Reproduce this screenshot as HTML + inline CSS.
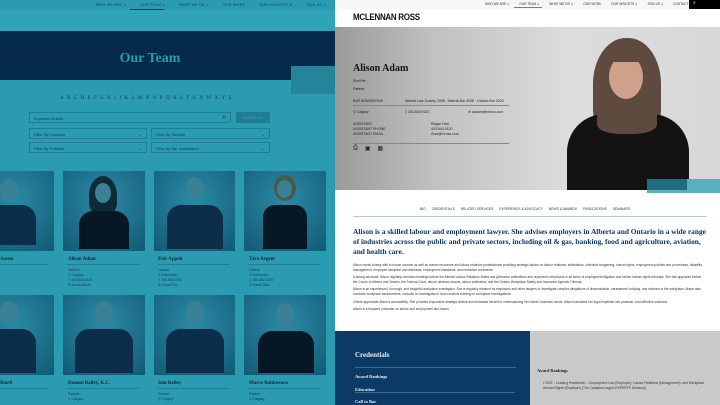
<!DOCTYPE html>
<html><head><style>
*{margin:0;padding:0;box-sizing:border-box}
body{width:720px;height:405px;overflow:hidden;position:relative;font-family:"Liberation Sans",sans-serif;background:#fff}
.a{position:absolute}
.serif{font-family:"Liberation Serif",serif}
.nav{display:flex;white-space:nowrap}
</style></head><body>
<!-- LEFT PANEL -->
<div class="a" style="left:0;top:0;width:335px;height:405px;background:#2b9bb1;overflow:hidden">
  <div class="a nav" style="left:96px;top:3px;font-size:3.5px;color:#0d3a50;gap:14px;letter-spacing:.3px"><span>WHO WE ARE ∨</span><span>OUR TEAM ∨</span><span>WHAT WE DO ∨</span><span>OUR WORK</span><span>OUR INSIGHTS ∨</span><span>JOIN US ∨</span><span>CONTACT US</span></div>
  <div class="a" style="left:130px;top:9px;width:34px;height:1px;background:#0d3a50"></div>
  <div class="a" style="left:0;top:10px;width:335px;height:21px;background:#2fa3b8"></div>
  <div class="a" style="left:0;top:31px;width:335px;height:49px;background:#062b4a"></div>
  <div class="a serif" style="left:0;top:51px;width:300px;text-align:center;color:#2b9bb1;font-size:14px;font-weight:bold">Our Team</div>
  <div class="a" style="left:291px;top:66px;width:44px;height:28px;background:#23849a"></div>
  <div class="a serif" style="left:60px;top:96px;font-size:5px;color:#0c3a55;letter-spacing:3.4px">ABCDEFGHIJKLMNOPQRSTUVWXYZ</div>
  <div class="a" style="left:29px;top:112px;width:202px;height:11px;border:1px solid #1f7e94;font-size:4px;color:#0c3a55;padding:3px 4px">Keyword Search<span style="position:absolute;right:4px;top:1px;font-size:7px">⌕</span></div>
  <div class="a" style="left:236px;top:112px;width:34px;height:11px;background:#1f7e94;font-size:4px;color:#2fa8bd;text-align:center;padding-top:3px">CLEAR ALL</div>
  <div class="a" style="left:29px;top:128px;width:118px;height:11px;border:1px solid #1f7e94;font-size:4px;color:#0c3a55;padding:3px 4px">Filter By Location<span style="float:right">⌄</span></div>
  <div class="a" style="left:151px;top:128px;width:119px;height:11px;border:1px solid #1f7e94;font-size:4px;color:#0c3a55;padding:3px 4px">Filter By Service<span style="float:right">⌄</span></div>
  <div class="a" style="left:29px;top:142px;width:118px;height:11px;border:1px solid #1f7e94;font-size:4px;color:#0c3a55;padding:3px 4px">Filter By Position<span style="float:right">⌄</span></div>
  <div class="a" style="left:151px;top:142px;width:119px;height:11px;border:1px solid #1f7e94;font-size:4px;color:#0c3a55;padding:3px 4px">Filter by Bar Jurisdiction<span style="float:right">⌄</span></div>

  <div class="a" style="left:-28px;top:171px;width:82px;height:80px;background:radial-gradient(circle at 50% 35%,#2b8aa6,#125a74)"><div class="a" style="left:28px;top:8px;width:18px;height:22px;border-radius:50%;background:#3a8196"></div><div class="a" style="left:10px;top:34px;width:54px;height:40px;border-radius:14px 14px 0 0;background:#0d2e4a"></div></div>
  <div class="a" style="left:63px;top:171px;width:82px;height:80px;background:radial-gradient(circle at 50% 35%,#2b8aa6,#125a74)"><div class="a" style="left:26px;top:5px;width:28px;height:38px;border-radius:50% 50% 30% 30%;background:#0f2b3a"></div><div class="a" style="left:32px;top:12px;width:16px;height:20px;border-radius:50%;background:#3a8196"></div><div class="a" style="left:16px;top:40px;width:50px;height:38px;border-radius:14px 14px 0 0;background:#061725"></div></div>
  <div class="a" style="left:154px;top:171px;width:81px;height:80px;background:radial-gradient(circle at 50% 35%,#2b8aa6,#125a74)"><div class="a" style="left:32px;top:6px;width:17px;height:22px;border-radius:50%;background:#3a8196"></div><div class="a" style="left:13px;top:34px;width:56px;height:44px;border-radius:14px 14px 0 0;background:#0d2e4a"></div></div>
  <div class="a" style="left:244px;top:171px;width:82px;height:80px;background:radial-gradient(circle at 50% 35%,#2b8aa6,#125a74)"><div class="a" style="left:30px;top:4px;width:22px;height:26px;border-radius:50%;background:#4a5a4a"></div><div class="a" style="left:33px;top:9px;width:15px;height:18px;border-radius:50%;background:#3a8196"></div><div class="a" style="left:19px;top:34px;width:44px;height:44px;border-radius:12px 12px 0 0;background:#061725"></div></div>
  <div class="a serif" style="left:0;top:257px;font-size:5px;font-weight:bold;color:#0c2a40">Aasen</div>
  <div class="a serif" style="left:68px;top:257px;font-size:5px;font-weight:bold;color:#0c2a40">Alison Adam</div>
  <div class="a serif" style="left:158px;top:257px;font-size:5px;font-weight:bold;color:#0c2a40">Eric Appelt</div>
  <div class="a serif" style="left:249px;top:257px;font-size:5px;font-weight:bold;color:#0c2a40">Tara Argent</div>
  <div class="a" style="left:0;top:264px;width:48px;height:1px;background:#1f7e94"></div>
  <div class="a" style="left:67px;top:264px;width:72px;height:1px;background:#1f7e94"></div>
  <div class="a" style="left:158px;top:264px;width:72px;height:1px;background:#1f7e94"></div>
  <div class="a" style="left:248px;top:264px;width:72px;height:1px;background:#1f7e94"></div>
  <div class="a" style="left:68px;top:268px;font-size:3.5px;line-height:5px;color:#0c3a55">Partner<br>⚲ Calgary<br>▯ 403.543.9120<br>✉ Email Alison</div>
  <div class="a" style="left:158px;top:268px;font-size:3.5px;line-height:5px;color:#0c3a55">Lawyer<br>⚲ Edmonton<br>▯ 780.482.9200<br>✉ Email Eric</div>
  <div class="a" style="left:249px;top:268px;font-size:3.5px;line-height:5px;color:#0c3a55">Partner<br>⚲ Edmonton<br>▯ 780.482.9200<br>✉ Email Tara</div>
  <div class="a" style="left:-28px;top:295px;width:82px;height:80px;background:radial-gradient(circle at 50% 35%,#2b8aa6,#125a74)"><div class="a" style="left:28px;top:6px;width:18px;height:24px;border-radius:50%;background:#3a8196"></div><div class="a" style="left:10px;top:34px;width:54px;height:44px;border-radius:14px 14px 0 0;background:#0d2e4a"></div></div>
  <div class="a" style="left:63px;top:295px;width:82px;height:80px;background:radial-gradient(circle at 50% 35%,#2b8aa6,#125a74)"><div class="a" style="left:32px;top:6px;width:18px;height:24px;border-radius:50%;background:#3a8196"></div><div class="a" style="left:12px;top:34px;width:58px;height:44px;border-radius:14px 14px 0 0;background:#0d2e4a"></div></div>
  <div class="a" style="left:154px;top:295px;width:81px;height:80px;background:radial-gradient(circle at 50% 35%,#2b8aa6,#125a74)"><div class="a" style="left:32px;top:6px;width:18px;height:24px;border-radius:50%;background:#3a8196"></div><div class="a" style="left:12px;top:34px;width:58px;height:44px;border-radius:14px 14px 0 0;background:#0d2e4a"></div></div>
  <div class="a" style="left:244px;top:295px;width:82px;height:80px;background:radial-gradient(circle at 50% 35%,#2b8aa6,#125a74)"><div class="a" style="left:32px;top:8px;width:18px;height:24px;border-radius:50%;background:#3a8196"></div><div class="a" style="left:14px;top:36px;width:56px;height:42px;border-radius:14px 14px 0 0;background:#061725"></div></div>
  <div class="a serif" style="left:0;top:381px;font-size:5px;font-weight:bold;color:#0c2a40">Ibarfi</div>
  <div class="a serif" style="left:68px;top:381px;font-size:5px;font-weight:bold;color:#0c2a40">Damon Bailey, K.C.</div>
  <div class="a serif" style="left:158px;top:381px;font-size:5px;font-weight:bold;color:#0c2a40">Iain Bailey</div>
  <div class="a serif" style="left:249px;top:381px;font-size:5px;font-weight:bold;color:#0c2a40">Marco Baldassaro</div>
  <div class="a" style="left:0;top:388px;width:48px;height:1px;background:#1f7e94"></div>
  <div class="a" style="left:67px;top:388px;width:72px;height:1px;background:#1f7e94"></div>
  <div class="a" style="left:158px;top:388px;width:72px;height:1px;background:#1f7e94"></div>
  <div class="a" style="left:248px;top:388px;width:72px;height:1px;background:#1f7e94"></div>
  <div class="a" style="left:68px;top:392px;font-size:3.5px;line-height:5px;color:#0c3a55">Partner<br>⚲ Calgary</div>
  <div class="a" style="left:158px;top:392px;font-size:3.5px;line-height:5px;color:#0c3a55">Partner<br>⚲ Calgary</div>
  <div class="a" style="left:249px;top:392px;font-size:3.5px;line-height:5px;color:#0c3a55">Partner<br>⚲ Calgary</div>
</div>

<!-- RIGHT PANEL -->
<div class="a" style="left:335px;top:0;width:385px;height:405px;background:#fff;overflow:hidden">
  <div class="a" style="left:0;top:0;width:385px;height:9px;background:#f6f6f6"></div>
  <div class="a nav" style="left:150px;top:2px;font-size:3.2px;color:#333;gap:10px"><span>WHO WE ARE ∨</span><span>OUR TEAM ∨</span><span>WHAT WE DO ∨</span><span>OUR WORK</span><span>OUR INSIGHTS ∨</span><span>JOIN US ∨</span><span>CONTACT US</span></div>
  <div class="a" style="left:179px;top:7px;width:28px;height:1px;background:#2b9bb1"></div>
  <div class="a" style="left:354px;top:0;width:31px;height:9px;background:#000;color:#fff;font-size:5px;padding-left:4px">⌕</div>
  <div class="a" style="left:18px;top:13px;font-size:8px;font-weight:bold;color:#111;letter-spacing:-.3px;transform:scaleY(1.1)">MCLENNAN ROSS</div>
  <div class="a" style="left:0;top:27px;width:385px;height:163px;background:linear-gradient(90deg,#9a9a9a 0%,#c0c0c0 25%,#dcdcdc 60%,#d8d8d8 100%)"></div>
  <!-- woman -->
  <div class="a" style="left:258px;top:38px;width:68px;height:96px;border-radius:48% 48% 25% 25%;background:#5e4a3e"></div>
  <div class="a" style="left:232px;top:114px;width:122px;height:76px;border-radius:38px 38px 0 0;background:#141212"></div>
  <div class="a" style="left:262px;top:110px;width:60px;height:24px;border-radius:0 0 40% 40%;background:#5e4a3e"></div>
  <div class="a" style="left:274px;top:55px;width:34px;height:44px;border-radius:50%;background:#cfa18b"></div>
  <div class="a" style="left:270px;top:44px;width:42px;height:18px;border-radius:50% 50% 0 0;background:#5e4a3e"></div>
  <div class="a" style="left:312px;top:179px;width:73px;height:14px;background:#5cafbf"></div>
  <div class="a" style="left:312px;top:179px;width:40px;height:11px;background:#1f6d7e"></div>
  <div class="a serif" style="left:18px;top:63px;font-size:10px;font-weight:bold;color:#111">Alison Adam</div>
  <div class="a" style="left:18px;top:77px;font-size:3.5px;line-height:8px;color:#222">She/Her<br>Partner</div>
  <div class="a" style="left:18px;top:99px;font-size:3.5px;color:#222;width:156px">BAR ADMISSIONS<span style="position:absolute;left:52px">Alberta Law Society 2008 · Alberta Bar 2008 · Ontario Bar 2020</span></div>
  <div class="a" style="left:18px;top:105px;width:156px;height:1px;background:#888"></div>
  <div class="a" style="left:18px;top:110px;font-size:3.5px;color:#222;width:156px">⚲ Calgary<span style="position:absolute;left:52px">▯ 403.543.9120</span><span style="position:absolute;left:115px">✉ aadam@mross.com</span></div>
  <div class="a" style="left:18px;top:122px;font-size:3.5px;line-height:5px;color:#222">ASSISTANT<br>ASSISTANT PHONE<br>ASSISTANT EMAIL</div>
  <div class="a" style="left:96px;top:122px;font-size:3.5px;line-height:5px;color:#222">Regan Hoa<br>403.543.9120<br>rhoa@mross.com</div>
  <div class="a" style="left:18px;top:143px;width:156px;height:1px;background:#888"></div>
  <div class="a nav" style="left:18px;top:145px;font-size:6px;color:#222;gap:7px"><span>⎙</span><span>▣</span><span>▦</span></div>
  <!-- tabs -->
  <div class="a nav" style="left:85px;top:207px;font-size:3.3px;color:#333;gap:6px"><span>BIO</span><span>CREDENTIALS</span><span>RELATED SERVICES</span><span>EXPERIENCE &amp; ADVOCACY</span><span>NEWS &amp; AWARDS</span><span>PUBLICATIONS</span><span>SEMINARS</span></div>
  <div class="a" style="left:18px;top:216px;width:354px;height:1px;background:#b5ccd0"></div>
  <div class="a serif" style="left:18px;top:227px;width:355px;font-size:7.4px;line-height:10px;font-weight:bold;color:#0d3760">Alison is a skilled labour and employment lawyer. She advises employers in Alberta and Ontario in a wide range of industries across the public and private sectors, including oil &amp; gas, banking, food and agriculture, aviation, and health care.</div>
  <div class="a" style="left:18px;top:263px;width:350px;font-size:3.2px;line-height:4.6px;color:#333">Alison works closely with in-house counsel as well as human resources and labour relations professionals providing strategic advice on labour relations, arbitrations, collective bargaining, human rights, employment policies and procedures, disability management, employee discipline and dismissal, employment standards, and restrictive covenants.
  <br><span style="display:block;height:3px"></span>A strong advocate, Alison regularly conducts hearings before the Alberta Labour Relations Board and grievance arbitrations and represents employers in all forms of employment litigation and before human rights tribunals. She has appeared before the Courts of Alberta and Ontario, the Federal Court, labour relations boards, labour arbitrators, and the Ontario Workplace Safety and Insurance Appeals Tribunal.
  <br><span style="display:block;height:3px"></span>Alison is an experienced, thorough, and insightful workplace investigator. She is regularly retained by employers and other lawyers to investigate complex allegations of discrimination, harassment, bullying, and violence in the workplace. Alison also conducts workplace assessments, consults on investigations, and conducts training on workplace investigations.
  <br><span style="display:block;height:3px"></span>Clients appreciate Alison's accessibility. She provides responsive strategic advice and dedicates herself to understanding her clients' business needs. Alison translates her legal expertise into practical, cost-effective solutions.
  <br><span style="display:block;height:3px"></span>Alison is a frequent presenter on labour and employment law issues.</div>
  <div class="a" style="left:0;top:331px;width:195px;height:74px;background:#0c3a66"></div>
  <div class="a" style="left:195px;top:331px;width:190px;height:74px;background:#c9c9c9"></div>
  <div class="a serif" style="left:20px;top:351px;font-size:7px;font-weight:bold;color:#e8eef4">Credentials</div>
  <div class="a" style="left:20px;top:367px;width:161px;height:1px;background:#3d6a93"></div>
  <div class="a serif" style="left:20px;top:371px;font-size:4.5px;font-weight:bold;color:#e8eef4;line-height:12.5px">Award Rankings<br>Education<br>Call to Bar</div>
  <div class="a" style="left:20px;top:392px;width:160px;height:1px;background:#3d6a93"></div>
  <div class="a serif" style="left:202px;top:368px;font-size:4.3px;font-weight:bold;color:#222">Award Rankings</div>
  <div class="a" style="left:208px;top:381px;width:165px;font-size:3.3px;line-height:5px;color:#333">• 2022 – Leading Practitioner – Employment Law (Employer), Labour Relations (Management), and Workplace Human Rights (Employer) (The Canadian Legal LEXPERT® Directory)</div>
</div>
</body></html>
